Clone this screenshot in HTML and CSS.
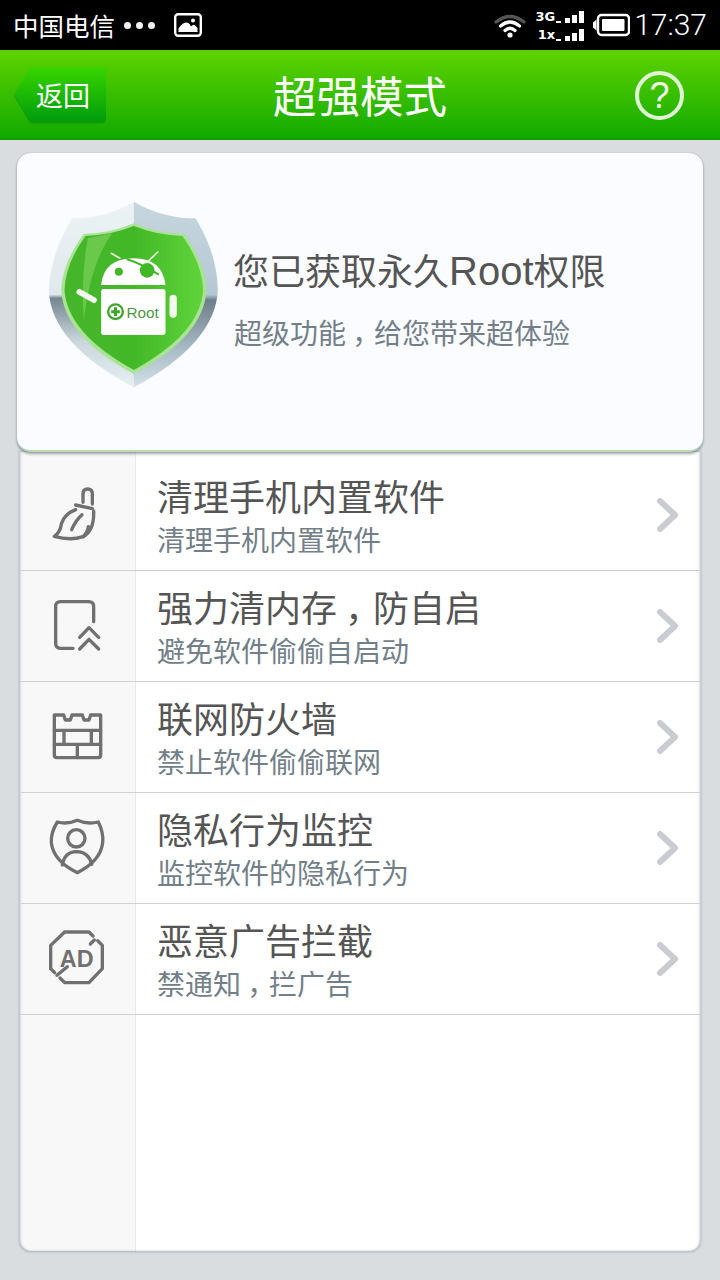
FILE: index.html
```html
<!DOCTYPE html>
<html lang="zh-CN">
<head>
  <meta charset="UTF-8">
  <meta name="viewport" content="width=device-width, initial-scale=1.0">
  <link rel="stylesheet" href="styles.css">
  <title>超强模式</title>
</head>

<body>

<div class="status-bar">
  <span class="carrier">中国电信</span>
  <span class="dots"><i></i><i></i><i></i></span>
  <svg class="pic-icon" width="28" height="24" viewBox="0 0 28 24">
    <rect x="1.2" y="1.2" width="25.6" height="21.6" rx="3" fill="none" stroke="#fff" stroke-width="2.4"/>
    <path d="M4.5 19v-3.5q4-6 7.500-6t5 4q2-2.500 3.500-1.500t3 3v4z" fill="#fff"/>
    <circle cx="19" cy="7.500" r="2" fill="#fff"/>
  </svg>
  <span class="status-right">
    <svg class="wifi" width="32" height="26" viewBox="0 0 32 26">
      <path d="M2 10Q16-1 30 10" fill="none" stroke="#555" stroke-width="3.200" stroke-linecap="round"/>
      <path d="M6.500 14Q16 6 25.500 14" fill="none" stroke="#fff" stroke-width="3.200" stroke-linecap="round"/>
      <path d="M11 18.500Q16 14 21 18.500" fill="none" stroke="#fff" stroke-width="3.200" stroke-linecap="round"/>
      <circle cx="16" cy="23" r="2.600" fill="#fff"/>
    </svg>
    <span class="signal">
      <span class="sig-row"><b>3G</b><u></u><i class="s1"></i><i class="s2"></i><i class="s3"></i></span>
      <span class="sig-row"><b>1x</b><u></u><i class="s1"></i><i class="s2"></i><i class="s3"></i></span>
    </span>
    <svg class="battery" width="38" height="24" viewBox="0 0 38 24">
      <path d="M4.500 6.500L1 9.500v5l3.500 3z" fill="#fff"/>
      <rect x="6" y="2" width="31" height="20" rx="3.500" fill="none" stroke="#fff" stroke-width="2.400"/>
      <rect x="10" y="6" width="22.500" height="12" rx="1" fill="#fff"/>
    </svg>
    <span class="clock">17:37</span>
  </span>
</div>

<div class="top-bar">
  <div class="back">
    <svg class="back-bg" width="94" height="58" viewBox="0 0 94 58">
      <defs>
        <linearGradient id="backFill" x1="0" y1="0" x2="0" y2="1">
          <stop offset="0" stop-color="#38d500"/>
          <stop offset="1" stop-color="#009c0c"/>
        </linearGradient>
      </defs>
      <path d="M1 28.500L16 3Q17 1 20 1H88Q93 1 93 6V51Q93 56 88 56H20Q17 56 16 54Z" fill="#0f8f06" transform="translate(0 1.500)" opacity=".7"/>
      <path d="M1 28.500L16 3Q17 1 20 1H88Q93 1 93 6V51Q93 56 88 56H20Q17 56 16 54Z" fill="url(#backFill)"/>
    </svg>
    <span class="back-label">返回</span>
  </div>
  <h1 class="page-title">超强模式</h1>
  <div class="help">?</div>
</div>

<div class="page">
  <div class="hero">
    <svg class="shield" width="172" height="190" viewBox="50 30 515 570">
      <defs>
        <linearGradient id="rimLeft" x1="0" y1="0" x2="0" y2="1">
          <stop offset="0" stop-color="#edf3f5"/>
          <stop offset=".5" stop-color="#dfe8ec"/>
          <stop offset=".52" stop-color="#75868f"/>
          <stop offset=".75" stop-color="#c9d6dc"/>
          <stop offset="1" stop-color="#e8f0f3"/>
        </linearGradient>
        <linearGradient id="rimRight" x1="0" y1="0" x2="0" y2="1">
          <stop offset="0" stop-color="#c7d6de"/>
          <stop offset=".5" stop-color="#b4c8d4"/>
          <stop offset=".53" stop-color="#6d7f8a"/>
          <stop offset=".8" stop-color="#a9bcc7"/>
          <stop offset="1" stop-color="#d3e1e8"/>
        </linearGradient>
        <linearGradient id="shieldGreen" x1="0" y1="0" x2="1" y2="0">
          <stop offset="0" stop-color="#46b52a"/>
          <stop offset=".5" stop-color="#43b828"/>
          <stop offset="1" stop-color="#5fd43a"/>
        </linearGradient>
        <filter id="soft"><feGaussianBlur stdDeviation="1.500"/></filter>
      </defs>
      <g filter="url(#soft)">
        <path d="M310 35Q225 85 125 85Q60 190 55 300Q60 460 310 592Z" fill="url(#rimLeft)"/>
        <path d="M310 35Q395 85 495 85Q560 190 562 300Q555 460 310 592Z" fill="url(#rimRight)"/>
        <path d="M310 100Q240 130 160 132Q95 220 92 300Q100 440 310 552Q520 440 528 300Q525 220 462 132Q380 130 310 100Z" fill="#a9e394"/>
        <path d="M310 108Q240 136 165 138Q105 220 102 300Q110 430 310 540Q510 430 518 300Q515 220 456 138Q380 136 310 108Z" fill="url(#shieldGreen)"/>
        <path d="M245 130Q195 140 172 145Q150 260 160 390Q180 220 245 130Z" fill="#7bd05a" opacity=".7"/>
        <path d="M212 285Q220 205 310 205Q395 205 405 285Z" fill="#fff"/>
        <path d="M288 207Q330 220 385 254" fill="none" stroke="#43b828" stroke-width="6"/>
        <circle cx="265" cy="245" r="12" fill="#43b828"/>
        <circle cx="350" cy="241" r="22" fill="#43b828"/>
        <path d="M268 205L242 190M352 215L382 186" stroke="#e6f7dd" stroke-width="5" stroke-linecap="round"/>
        <rect x="212" y="297" width="193" height="138" rx="8" fill="#fff"/>
        <path d="M147 306L190 330" stroke="#f3fbef" stroke-width="18" stroke-linecap="round"/>
        <path d="M428 325V372" stroke="#f3fbef" stroke-width="22" stroke-linecap="round"/>
        <circle cx="255" cy="365" r="22" fill="none" stroke="#3fa52c" stroke-width="7"/>
        <path d="M255 352v26M242 365h26" stroke="#3fa52c" stroke-width="9"/>
      </g>
      <text class="root-label" x="288" y="383">Root</text>
    </svg>
    <div class="hero-text">
      <div class="hero-title">您已获取永久<span class="latin">Root</span>权限</div>
      <div class="hero-sub">超级功能<span class="comma">，</span>给您带来超体验</div>
    </div>
  </div>

  <div class="list">
    <div class="row">
      <div class="row-icon">
        <svg class="line-icon" width="60" height="60" viewBox="140 135 180 180">
          <path d="M248 190V165Q248 150 262 150T276 165V195"/>
          <path d="M226 198L276 209"/>
          <path d="M226 212Q192 225 183 255Q180 280 162 292Q210 306 248 293Q282 275 280 216"/>
          <path d="M214 272Q225 245 245 227M248 293Q262 280 264 263"/>
        </svg>
      </div>
      <div class="row-text">
        <div class="row-title">清理手机内置软件</div>
        <div class="row-sub">清理手机内置软件</div>
      </div>
      <svg class="chevron" width="24" height="36" viewBox="0 0 24 36"><path d="M4 4L19 18L4 32"/></svg>
    </div>
    <div class="row">
      <div class="row-icon">
        <svg class="line-icon" width="60" height="60" viewBox="140 465 180 180">
          <path d="M218 625H180Q166 625 166 610V500Q166 485 180 485H265Q280 485 280 500V545"/>
          <path d="M238 592L266 563L295 592M238 627L266 598L295 627"/>
        </svg>
      </div>
      <div class="row-text">
        <div class="row-title">强力清内存<span class="comma">，</span>防自启</div>
        <div class="row-sub">避免软件偷偷自启动</div>
      </div>
      <svg class="chevron" width="24" height="36" viewBox="0 0 24 36"><path d="M4 4L19 18L4 32"/></svg>
    </div>
    <div class="row">
      <div class="row-icon">
        <svg class="line-icon" width="60" height="60" viewBox="142 85 180 180">
          <path d="M164 112H192L197 127H212L217 112H248L253 127H268L273 112H303V232Q303 240 295 240H172Q164 240 164 232Z"/>
          <path d="M164 158H303M164 200H303M193 158V200M275 158V200M233 200V240"/>
        </svg>
      </div>
      <div class="row-text">
        <div class="row-title">联网防火墙</div>
        <div class="row-sub">禁止软件偷偷联网</div>
      </div>
      <svg class="chevron" width="24" height="36" viewBox="0 0 24 36"><path d="M4 4L19 18L4 32"/></svg>
    </div>
    <div class="row">
      <div class="row-icon">
        <svg class="line-icon" width="60" height="60" viewBox="144 418 180 180">
          <path d="M175 433Q205 441 235 428Q265 441 298 433Q314 465 311 495Q305 550 235 585Q163 550 157 495Q155 465 175 433Z"/>
          <circle cx="232" cy="482" r="26"/>
          <path d="M190 562Q196 523 233 522Q270 523 278 560"/>
        </svg>
      </div>
      <div class="row-text">
        <div class="row-title">隐私行为监控</div>
        <div class="row-sub">监控软件的隐私行为</div>
      </div>
      <svg class="chevron" width="24" height="36" viewBox="0 0 24 36"><path d="M4 4L19 18L4 32"/></svg>
    </div>
    <div class="row">
      <div class="row-icon">
        <svg class="line-icon" width="60" height="60" viewBox="142 748 180 180">
          <path d="M165 882L153 870V800L195 760H268L280 772M294 786L308 800V870L268 912H195L181 898"/>
          <path d="M172 890L203 864M272 796L284 784"/>
          <text class="ad-label" x="231" y="865">AD</text>
        </svg>
      </div>
      <div class="row-text">
        <div class="row-title">恶意广告拦截</div>
        <div class="row-sub">禁通知<span class="comma">，</span>拦广告</div>
      </div>
      <svg class="chevron" width="24" height="36" viewBox="0 0 24 36"><path d="M4 4L19 18L4 32"/></svg>
    </div>
  </div>
</div>

</body>
</html>
```

FILE: styles.css
```css
* {
  box-sizing: border-box;
}

body {
  margin: 0;
  width: 720px;
  height: 1280px;
  overflow: hidden;
  background: #d9dde0;
  font-family: "Noto Sans CJK SC", "Noto Sans", sans-serif;
  display: flex;
  flex-direction: column;
}

/* the reference centres the comma in its cell */
.comma {
  padding-left: .22em;
  letter-spacing: -.22em;
}

/* status bar */
.status-bar {
  height: 50px;
  background: #000;
  color: #fff;
  display: flex;
  align-items: center;
  padding: 0 13px 0 13px;
  flex-shrink: 0;
}

.carrier {
  font-size: 25.5px;
  line-height: 50px;
  width: 111px;
}

.dots {
  display: flex;
  gap: 5px;
  width: 50px;
}

.dots i {
  width: 7px;
  height: 7px;
  border-radius: 50%;
  background: #f2f2f2;
}

.status-right {
  margin-left: auto;
  display: flex;
  align-items: center;
}

.wifi {
  margin-right: 8px;
}

.signal {
  width: 50px;
  margin-right: 8px;
  display: flex;
  flex-direction: column;
  gap: 5px;
}

.sig-row {
  display: flex;
  align-items: flex-end;
  justify-content: flex-end;
  height: 13px;
  gap: 1px;
}

.sig-row b {
  font: bold 13px/12px "DejaVu Sans", sans-serif;
  color: #fff;
}

.sig-row u {
  width: 5px;
  height: 2px;
  background: #fff;
  margin-right: 2px;
}

.sig-row i {
  width: 5px;
  background: #fff;
  margin-left: 1px;
}

.sig-row .s1 { height: 5px; }
.sig-row .s2 { height: 8px; }
.sig-row .s3 { height: 12px; }

.battery {
  margin-right: 4px;
}

.clock {
  font-family: "Roboto", sans-serif;
  font-weight: 300;
  font-size: 30px;
  line-height: 50px;
}

/* green header */
.top-bar {
  height: 90px;
  flex-shrink: 0;
  background: linear-gradient(#5ed300, #12aa00);
  border-bottom: 2px solid #0f9f00;
  display: grid;
  grid-template-columns: 1fr auto 1fr;
  align-items: center;
  padding: 0 36px 0 13px;
}

.back {
  position: relative;
  width: 94px;
  height: 58px;
  display: flex;
  align-items: center;
  justify-content: flex-end;
  padding-right: 17px;
}

.back-bg {
  position: absolute;
  left: 0;
  top: 0;
}

.back-label {
  position: relative;
  color: #fff;
  font-size: 27px;
  line-height: 58px;
}

.page-title {
  margin: 0 0 0 23px;
  color: #fff;
  font-size: 43.5px;
  font-weight: 400;
  line-height: 90px;
}

.help {
  justify-self: end;
  width: 49px;
  height: 49px;
  border: 4px solid #e0f5d5;
  border-radius: 50%;
  color: #effbe8;
  font: 36px/41px "Liberation Sans", sans-serif;
  text-align: center;
}

/* content */
.page {
  flex: 1;
  padding: 13px 17px 28px;
  display: flex;
  flex-direction: column;
}

.hero {
  height: 299px;
  flex-shrink: 0;
  position: relative;
  z-index: 1;
  background: #fbfcff;
  border-radius: 14px;
  border-bottom: 2px solid #bcdcb4;
  box-shadow: 0 2px 3px rgba(80, 95, 105, .55), 0 0 1px rgba(90, 100, 110, .5);
  display: flex;
  align-items: flex-start;
  padding: 47px 0 0 30px;
}

.shield {
  flex-shrink: 0;
}

.root-label {
  font: 46px "Liberation Sans", sans-serif;
  fill: #4d9a42;
}

.hero-text {
  margin: 43px 0 0 15px;
}

.hero-title {
  font-size: 36px;
  line-height: 52px;
  color: #555;
  margin-left: -1px;
}

.latin {
  font-family: "Liberation Sans", sans-serif;
  font-size: 40px;
  line-height: 40px;
}

.hero-sub {
  margin-top: 17px;
  font-size: 28px;
  line-height: 40px;
  color: #737f89;
}

.list {
  flex: 1;
  margin: 0 2px;
  padding-top: 8px;
  background: linear-gradient(to right, #f8f8f8 116px, #e9e9e9 116px, #e9e9e9 117px, #fff 117px);
  border-radius: 0 0 12px 12px;
  box-shadow: inset 3px 0 3px -2px rgba(110, 120, 130, .5), inset -3px 0 3px -2px rgba(110, 120, 130, .5), inset 0 -2px 2px -1px rgba(110, 120, 130, .5), 0 0 2px rgba(110, 120, 130, .6);
}

.row {
  height: 111px;
  display: flex;
  align-items: center;
  border-bottom: 1px solid #cfd0d1;
}

.row-icon {
  width: 117px;
  height: 100%;
  flex-shrink: 0;
  display: flex;
  align-items: center;
  justify-content: center;
  padding: 0 2px 2px 0;
}

.line-icon {
  fill: none;
  stroke: #707070;
  stroke-width: 10;
  stroke-linecap: round;
  stroke-linejoin: round;
}

.ad-label {
  font: bold 70px "Liberation Sans", sans-serif;
  fill: #707070;
  stroke: none;
  text-anchor: middle;
}

.row-text {
  flex: 1;
  padding: 1px 0 0 21px;
}

.row-title {
  font-size: 36px;
  line-height: 46px;
  color: #555;
}

.row-sub {
  margin-top: 1px;
  font-size: 28px;
  line-height: 40px;
  color: #737f89;
}

.chevron {
  margin-right: 21px;
  fill: none;
  stroke: #c9cdd1;
  stroke-width: 6;
  stroke-linecap: round;
  stroke-linejoin: round;
}
```
